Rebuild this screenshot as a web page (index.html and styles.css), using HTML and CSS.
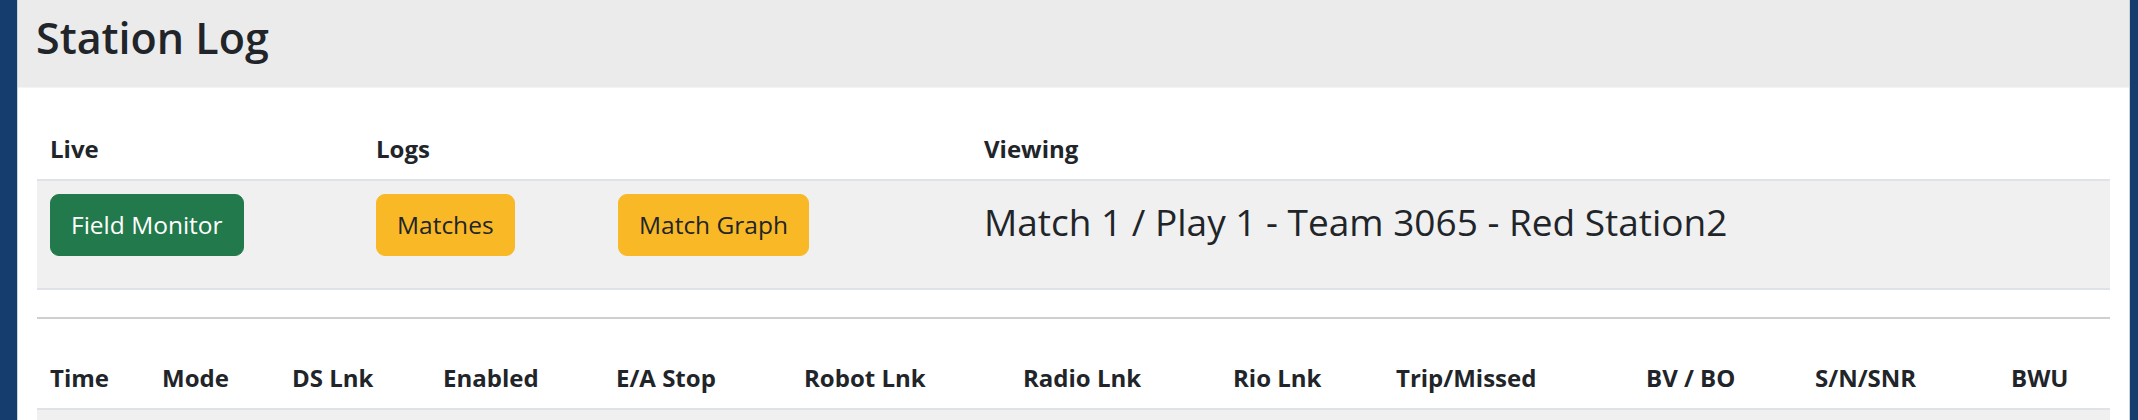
FILE: index.html
```html
<!DOCTYPE html>
<html lang="en">
<head>
<meta charset="utf-8">
<title>Station Log</title>
<link rel="stylesheet" href="styles.css">
</head>
<body>
<div class="card">
  <div class="card-header">
    <h3 class="card-title">Station Log</h3>
  </div>
  <div class="card-body">
    <table class="nav-table">
      <colgroup>
        <col class="n1"><col class="n2"><col class="n3"><col class="n4">
      </colgroup>
      <thead>
        <tr><th>Live</th><th>Logs</th><th></th><th>Viewing</th></tr>
      </thead>
      <tbody>
        <tr>
          <td><button class="btn btn-success">Field Monitor</button></td>
          <td><button class="btn btn-warning">Matches</button></td>
          <td><button class="btn btn-warning">Match Graph</button></td>
          <td><h4 class="viewing">Match 1 / Play 1 - Team 3065 - Red Station2</h4></td>
        </tr>
      </tbody>
    </table>
    <hr class="divider">
    <table class="log-table">
      <colgroup>
        <col class="c1"><col class="c2"><col class="c3"><col class="c4"><col class="c5"><col class="c6">
        <col class="c7"><col class="c8"><col class="c9"><col class="c10"><col class="c11"><col class="c12">
      </colgroup>
      <thead>
        <tr>
          <th>Time</th><th>Mode</th><th>DS Lnk</th><th>Enabled</th><th>E/A Stop</th><th>Robot Lnk</th>
          <th>Radio Lnk</th><th>Rio Lnk</th><th>Trip/Missed</th><th>BV / BO</th><th>S/N/SNR</th><th>BWU</th>
        </tr>
      </thead>
      <tbody>
        <tr class="striped">
          <td>&nbsp;</td><td></td><td></td><td></td><td></td><td></td>
          <td></td><td></td><td></td><td></td><td></td><td></td>
        </tr>
      </tbody>
    </table>
  </div>
</div>
</body>
</html>
```

FILE: styles.css
```css
html, body {
  margin: 0;
  padding: 0;
  height: 100%;
}

body {
  background: #153e6e;
  padding: 0 8px 0 17px;
  font-family: "Open Sans", "Noto Sans", sans-serif;
  color: #212529;
  overflow: hidden;
}

.card {
  background: #ffffff;
  border-left: 1px solid #c9d1da;
  border-right: 1px solid #c9d1da;
  min-height: 100%;
}

.card-header {
  background: #ebebeb;
  height: 88px;
  box-sizing: border-box;
  padding: 12px 18px 0;
  border-bottom: 1px solid #f4f4f4;
}

.card-title {
  margin: 0;
  font-size: 43px;
  font-weight: 600;
  line-height: 1.2;
  color: #212529;
}

.card-body {
  padding: 30px 19px 0;
}

table {
  border-collapse: collapse;
  table-layout: fixed;
  width: 100%;
}

th {
  text-align: left;
  font-weight: 700;
  font-size: 24px;
  line-height: 36px;
  padding: 13px 13px 12px;
  vertical-align: bottom;
}

.n1 { width: 326px; }
.n2 { width: 242px; }
.n3 { width: 366px; }
.n4 { width: auto; }

.nav-table tbody tr {
  background: #f0f0f0;
  border-top: 2px solid #dfe2e6;
  border-bottom: 2px solid #dfe2e6;
}

.nav-table td {
  padding: 13px 13px 32px;
  vertical-align: top;
}

.btn {
  font-family: "Open Sans", "Noto Sans", sans-serif;
  font-size: 24.5px;
  line-height: 34px;
  padding: 13px 20px;
  border: 1px solid transparent;
  border-radius: 9px;
  cursor: pointer;
}

.btn-success {
  background: #22794b;
  border-color: #22794b;
  color: #ffffff;
}

.btn-warning {
  background: #f9b927;
  border-color: #f9b927;
  color: #212529;
}

.viewing {
  margin: 6px 0 0;
  font-size: 37px;
  font-weight: 400;
  line-height: 1.2;
}

.divider {
  margin: 27px 0 0;
  border: 0;
  border-top: 2px solid #cfcfcf;
  height: 0;
}

.log-table {
  margin-top: 28px;
}

.log-table thead th {
  border-bottom: 2px solid #dfe2e6;
}

.log-table td {
  padding: 13px;
  font-size: 24px;
  line-height: 36px;
}

.log-table .striped {
  background: #f0f0f0;
}

.c1 { width: 112px; }
.c2 { width: 130px; }
.c3 { width: 151px; }
.c4 { width: 173px; }
.c5 { width: 188px; }
.c6 { width: 219px; }
.c7 { width: 210px; }
.c8 { width: 163px; }
.c9 { width: 250px; }
.c10 { width: 169px; }
.c11 { width: 196px; }
.c12 { width: auto; }
```
